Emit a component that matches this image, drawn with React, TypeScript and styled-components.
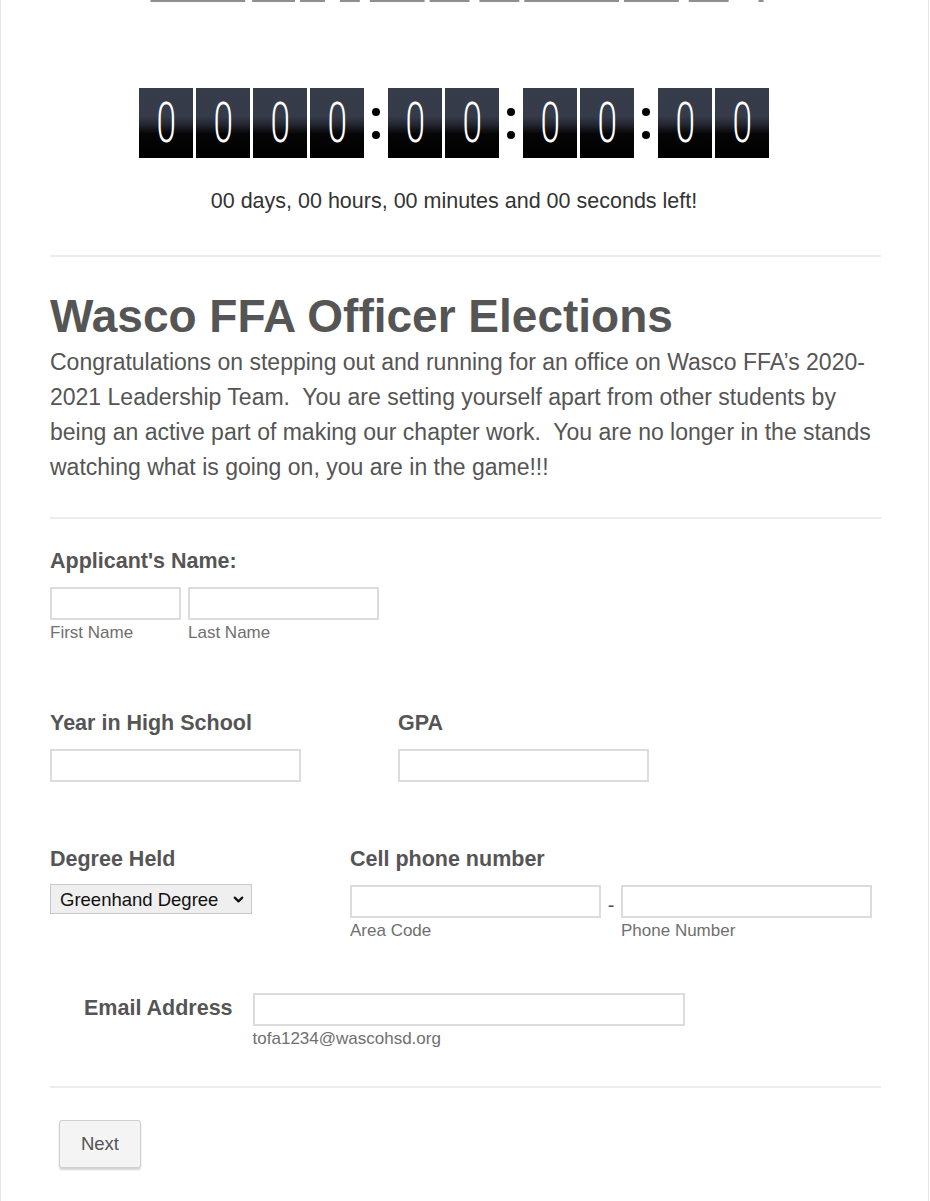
import React from "react";
import styled, { createGlobalStyle } from "styled-components";
import { ChevronDown } from "lucide-react";

const GlobalStyle = createGlobalStyle`
  html, body {
    margin: 0;
    padding: 0;
    background: #fff;
  }
  body {
    font-family: "Liberation Sans", Arial, sans-serif;
    color: #555;
  }
`;

export default function App() {
  return (
    <>
      <GlobalStyle />
      <Page>
        <TopStrip viewBox="0 0 930 2" preserveAspectRatio="none">
          {/* bottom edge of the banner image that is scrolled off the top */}
          <path d="M150 1h95M252 1h43M300 1h25M340 1h20M370 1h55M430 1h40M480 1h40M525 1h95M625 1h55M690 1h40M760 1h5" stroke="#8f8f8f" strokeWidth="2" />
        </TopStrip>

        <Countdown>
          <Clock>
            <DigitGroup>
              <Digit><span>0</span></Digit>
              <Digit><span>0</span></Digit>
              <Digit><span>0</span></Digit>
              <Digit><span>0</span></Digit>
            </DigitGroup>
            <Colon><Dot /><Dot /></Colon>
            <DigitGroup>
              <Digit><span>0</span></Digit>
              <Digit><span>0</span></Digit>
            </DigitGroup>
            <Colon><Dot /><Dot /></Colon>
            <DigitGroup>
              <Digit><span>0</span></Digit>
              <Digit><span>0</span></Digit>
            </DigitGroup>
            <Colon><Dot /><Dot /></Colon>
            <DigitGroup>
              <Digit><span>0</span></Digit>
              <Digit><span>0</span></Digit>
            </DigitGroup>
          </Clock>
          <TimeLeft>00 days, 00 hours, 00 minutes and 00 seconds left!</TimeLeft>
        </Countdown>

        <Content>
          <Divider />
          <Title>Wasco FFA Officer Elections</Title>
          <Intro>
            Congratulations on stepping out and running for an office on Wasco
            FFA’s 2020-2021 Leadership Team.&nbsp; You are setting yourself
            apart from other students by being an active part of making our
            chapter work.&nbsp; You are no longer in the stands watching what is
            going on, you are in the game!!!
          </Intro>
          <Divider $top={32} />

          <Field $top={30}>
            <Label>Applicant's Name:</Label>
            <InputRow>
              <SubField>
                <TextInput $w={131} />
                <Hint>First Name</Hint>
              </SubField>
              <SubField>
                <TextInput $w={191} />
                <Hint>Last Name</Hint>
              </SubField>
            </InputRow>
          </Field>

          <FieldRow $top={68} $gap={97}>
            <Field>
              <Label>Year in High School</Label>
              <TextInput $w={251} />
            </Field>
            <Field>
              <Label>GPA</Label>
              <TextInput $w={251} />
            </Field>
          </FieldRow>

          <FieldRow $top={65} $gap={98}>
            <Field>
              <Label>Degree Held</Label>
              <SelectWrap>
                <Select defaultValue="Greenhand Degree">
                  <option>Greenhand Degree</option>
                  <option>Chapter Degree</option>
                  <option>State Degree</option>
                </Select>
                <SelectArrow size={15} strokeWidth={3.5} />
              </SelectWrap>
            </Field>
            <Field>
              <Label>Cell phone number</Label>
              <InputRow $gap={0}>
                <SubField>
                  <TextInput $w={251} />
                  <Hint>Area Code</Hint>
                </SubField>
                <Dash>-</Dash>
                <SubField>
                  <TextInput $w={251} />
                  <Hint>Phone Number</Hint>
                </SubField>
              </InputRow>
            </Field>
          </FieldRow>

          <EmailRow>
            <EmailLabel>Email Address</EmailLabel>
            <SubField>
              <TextInput $w={432} />
              <Hint>tofa1234@wascohsd.org</Hint>
            </SubField>
          </EmailRow>

          <Divider $top={37} />
          <NextButton type="button">Next</NextButton>
        </Content>
      </Page>
    </>
  );
}

const Page = styled.div`
  width: 927px;
  min-height: 1201px;
  border-left: 1px solid #e6e6e6;
  border-right: 1px solid #e6e6e6;
  box-sizing: content-box;
`;

const TopStrip = styled.svg`
  display: block;
  width: 927px;
  height: 2px;
`;

const Countdown = styled.div`
  width: 906px;
  padding-top: 86px;
  display: flex;
  flex-direction: column;
  align-items: center;
`;

const Clock = styled.div`
  display: flex;
  align-items: center;
`;

const DigitGroup = styled.div`
  display: flex;
  gap: 3px;
`;

const Digit = styled.div`
  width: 54px;
  height: 70px;
  background: linear-gradient(
    to bottom,
    #373c4b 0%,
    #363b4a 40%,
    #2c303d 47%,
    #22252e 53%,
    #141519 59%,
    #050506 66%,
    #000 100%
  );
  color: #fff;
  font-family: Roboto, "Liberation Sans", sans-serif;
  font-weight: 300;
  font-size: 55px;
  line-height: 70px;
  text-align: center;

  span {
    display: inline-block;
    transform: scaleX(0.64);
  }
`;

const Colon = styled.div`
  width: 24px;
  height: 70px;
  display: flex;
  flex-direction: column;
  align-items: center;
  justify-content: center;
  gap: 15px;
`;

const Dot = styled.span`
  display: block;
  width: 8px;
  height: 8px;
  border-radius: 50%;
  background: #000;
`;

const TimeLeft = styled.div`
  margin-top: 31px;
  font-size: 21.5px;
  line-height: 24px;
  color: #333;
`;

const Content = styled.div`
  padding: 0 47px 0 49px;
`;

const Divider = styled.hr<{ $top?: number }>`
  margin: ${(p) => p.$top ?? 42}px 0 0;
  border: 0;
  border-top: 2px solid #ececec;
  height: 0;
`;

const Title = styled.h1`
  margin: 33px 0 0;
  font-size: 46px;
  line-height: 52px;
  font-weight: 700;
  color: #555;
`;

const Intro = styled.p`
  margin: 3px 0 0;
  font-size: 23px;
  line-height: 35px;
  color: #555;
`;

const Field = styled.div<{ $top?: number }>`
  margin-top: ${(p) => p.$top ?? 0}px;
  display: flex;
  flex-direction: column;
  align-items: flex-start;
`;

const FieldRow = styled.div<{ $top: number; $gap: number }>`
  margin-top: ${(p) => p.$top}px;
  display: flex;
  gap: ${(p) => p.$gap}px;
`;

const Label = styled.label`
  font-size: 21.5px;
  line-height: 24px;
  font-weight: 700;
  color: #555;
  margin-bottom: 14px;
`;

const InputRow = styled.div<{ $gap?: number }>`
  display: flex;
  gap: ${(p) => p.$gap ?? 7}px;
`;

const SubField = styled.div`
  display: flex;
  flex-direction: column;
`;

const TextInput = styled.input.attrs({ type: "text" })<{ $w: number }>`
  box-sizing: border-box;
  width: ${(p) => p.$w}px;
  height: 33px;
  margin: 0;
  border: 2px solid #dcdcdc;
  background: #fff;
  font-size: 16px;
  padding: 4px 6px;
`;

const Hint = styled.span`
  margin-top: 3px;
  font-size: 17px;
  line-height: 20px;
  color: #6f6f6f;
`;

const SelectWrap = styled.div`
  position: relative;
  margin-top: -1px;
`;

const Select = styled.select`
  display: block;
  box-sizing: border-box;
  width: 202px;
  height: 30px;
  font-family: "Liberation Sans", Arial, sans-serif;
  font-size: 18.5px;
  color: #111;
  background: #efefef;
  border: 1px solid #c8c8c8;
  padding: 0 28px 0 9px;
  appearance: none;
  -webkit-appearance: none;
  border-radius: 0;
`;

const SelectArrow = styled(ChevronDown)`
  position: absolute;
  right: 6px;
  top: 8px;
  color: #111;
  pointer-events: none;
`;

const Dash = styled.span`
  width: 20px;
  text-align: center;
  font-size: 20px;
  line-height: 40px;
  color: #555;
`;

const EmailRow = styled.div`
  margin-top: 52px;
  padding-left: 34px;
  display: flex;
  gap: 20px;
  align-items: flex-start;
`;

const EmailLabel = styled.label`
  font-size: 21.5px;
  font-weight: 700;
  color: #555;
  line-height: 30px;
`;

const NextButton = styled.button`
  margin: 32px 0 30px 9px;
  width: 82px;
  height: 48px;
  font-family: "Liberation Sans", Arial, sans-serif;
  font-size: 18.5px;
  color: #555;
  background: #f4f4f4;
  border: 1px solid #d0d0d0;
  border-radius: 3px;
  box-shadow: 0 2px 2px rgba(0, 0, 0, 0.18);
`;
